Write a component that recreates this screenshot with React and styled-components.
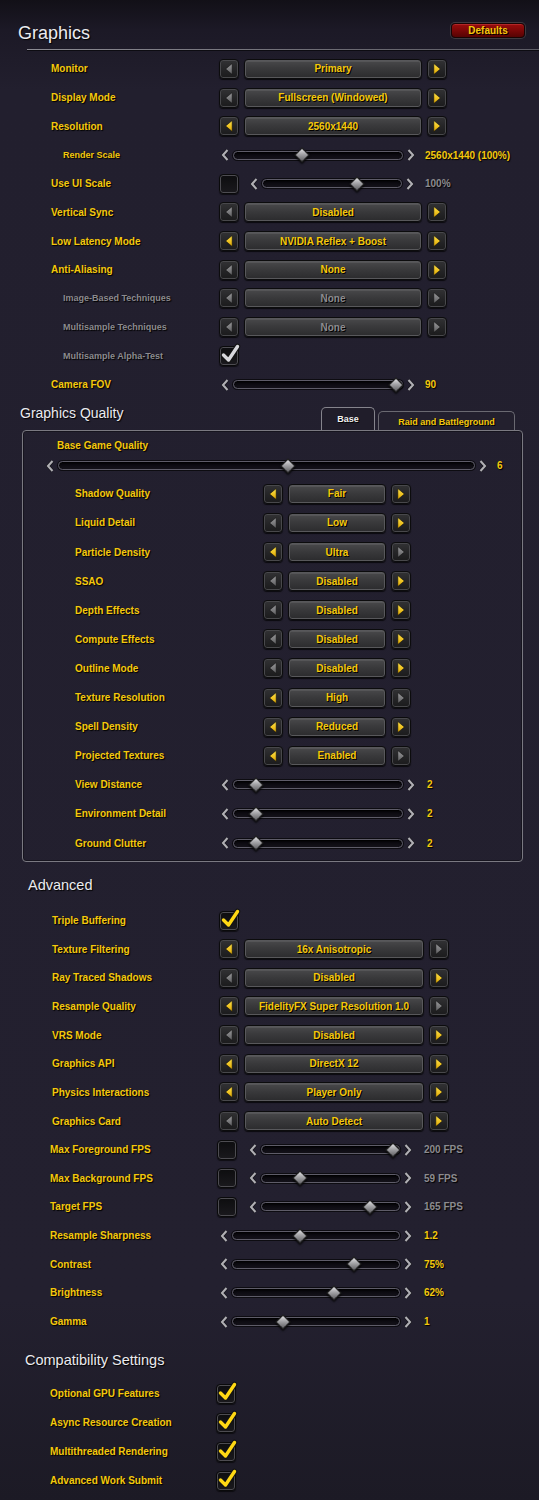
import React from 'react';
import styled, { createGlobalStyle } from 'styled-components';

const GOLD = '#f4c80c';
const GREY_TEXT = '#8c8b8f';

const GlobalStyle = createGlobalStyle`
  html, body {
    margin: 0;
    padding: 0;
    background: #23202f;
  }
  body {
    font-family: "Liberation Sans", Arial, sans-serif;
  }
`;

const Page = styled.div`
  width: 539px;
  height: 1500px;
  overflow: hidden;
  background: linear-gradient(
    180deg,
    #121017 0px,
    #1c1926 30px,
    #221f2e 90px,
    #23202f 1300px,
    #1c1a25 1500px
  );
`;

const Header = styled.div`
  display: flex;
  align-items: ${p => p.$align || 'center'};
  height: ${p => p.$h}px;
  padding: ${p => p.$pt || 0}px 0 ${p => p.$pb || 0}px ${p => p.$x}px;
  box-sizing: border-box;
`;

const Title = styled.div`
  font-size: ${p => p.$size || 14.5}px;
  line-height: 1.15;
  color: #ebebef;
  text-shadow: 1px 1px 1px #000;
  margin-bottom: ${p => p.$mb || 0}px;
`;

const DefaultsButton = styled.div`
  margin-left: auto;
  margin-right: 14px;
  margin-bottom: 6px;
  width: 74px;
  height: 15px;
  box-sizing: border-box;
  border-radius: 4px;
  border: 1px solid #1a0404;
  background: linear-gradient(180deg, #9a0d0d 0%, #7a0707 50%, #560303 100%);
  box-shadow: 0 0 0 1px #3e3a40, inset 0 1px 0 rgba(255, 120, 120, 0.25);
  display: flex;
  align-items: center;
  justify-content: center;
  font-size: 10px;
  font-weight: bold;
  color: ${GOLD};
  text-shadow: 1px 1px 0 #000;
`;

const Divider = styled.div`
  height: 1px;
  margin-left: 27px;
  background: linear-gradient(90deg, #8d8c94, #6c6b73 60%, #5e5d66);
  box-shadow: 0 1px 0 rgba(0, 0, 0, 0.55);
`;

const Rows = styled.div`
  padding-top: ${p => p.$pt || 0}px;
`;

const Row = styled.div`
  display: flex;
  align-items: center;
  height: ${p => p.$h}px;
  padding-left: ${p => p.$x}px;
`;

const Label = styled.div`
  flex: none;
  box-sizing: border-box;
  width: ${p => p.$w}px;
  padding-left: ${p => p.$indent || 0}px;
  font-size: ${p => (p.$small ? 9 : 10)}px;
  font-weight: bold;
  color: ${p => (p.$dim ? GREY_TEXT : GOLD)};
  text-shadow: 1px 1px 1px #000;
  white-space: nowrap;
`;

/* ---------- arrow stepper (dropdown) ---------- */

const Stepper = styled.div`
  display: flex;
  align-items: center;
  gap: 5px;
`;

const ArrowBtn = styled.div`
  width: 20px;
  height: 20px;
  box-sizing: border-box;
  border-radius: 4px;
  border: 1px solid #0c0c0d;
  background: linear-gradient(180deg, #323234 0%, #232325 60%, #1b1b1c 100%);
  box-shadow: inset 0 0 0 1px #48484b, 0 1px 1px rgba(0, 0, 0, 0.7);
  display: flex;
  align-items: center;
  justify-content: center;
`;

const ValueBox = styled.div`
  width: ${p => p.$w}px;
  height: 20px;
  box-sizing: border-box;
  border-radius: 4px;
  border: 1px solid #0c0c0d;
  background: linear-gradient(180deg, #4a4a4c 0%, #3a3a3c 45%, #2b2b2d 100%);
  box-shadow: inset 0 0 0 1px #58585b, inset 0 2px 0 rgba(255, 255, 255, 0.08),
    0 1px 1px rgba(0, 0, 0, 0.7);
  display: flex;
  align-items: center;
  justify-content: center;
  font-size: 10px;
  font-weight: bold;
  color: ${p => (p.$dim ? GREY_TEXT : GOLD)};
  text-shadow: 1px 1px 0 #000;
  white-space: nowrap;
`;

const Triangle = ({ dir, on }) => (
  <svg width="8" height="12" viewBox="0 0 8 12">
    <defs>
      <linearGradient id={`tri-${on ? 'on' : 'off'}`} x1="0" y1="0" x2="0" y2="1">
        <stop offset="0" stopColor={on ? '#ffe24a' : '#9a9a9c'} />
        <stop offset="1" stopColor={on ? '#e0a800' : '#5e5e60'} />
      </linearGradient>
    </defs>
    <polygon
      points={dir === 'left' ? '7.2,0.5 7.2,11.5 0.6,6' : '0.8,0.5 0.8,11.5 7.4,6'}
      fill={`url(#tri-${on ? 'on' : 'off'})`}
      stroke="#111"
      strokeWidth="0.6"
    />
  </svg>
);

const Dropdown = ({ value, width, left, right, dim }) => (
  <Stepper>
    <ArrowBtn>
      <Triangle dir="left" on={left} />
    </ArrowBtn>
    <ValueBox $w={width} $dim={dim}>{value}</ValueBox>
    <ArrowBtn>
      <Triangle dir="right" on={right} />
    </ArrowBtn>
  </Stepper>
);

/* ---------- slider ---------- */

const SliderWrap = styled.div`
  display: flex;
  align-items: center;
  margin-left: ${p => p.$lead || 0}px;
`;

const ChevronSvg = styled.svg`
  flex: none;
  display: block;
`;

const Chevron = ({ dir }) => {
  const pts = dir === 'left' ? '6.5,1 2,6 6.5,11' : '1.5,1 6,6 1.5,11';
  return (
    <ChevronSvg width="8" height="12" viewBox="0 0 8 12">
      <polyline points={pts} fill="none" stroke="#15141a" strokeWidth="3.4" />
      <polyline points={pts} fill="none" stroke="#b0afb4" strokeWidth="2.1" />
    </ChevronSvg>
  );
};

const Track = styled.div`
  position: relative;
  flex: none;
  width: ${p => p.$w}px;
  height: 9px;
  margin: 0 4px;
  box-sizing: border-box;
  border-radius: 5px;
  border: 1px solid #5e5c68;
  background: linear-gradient(180deg, #060509, #14121a);
  box-shadow: 0 0 0 1px #0d0c11, inset 0 1px 2px #000;
`;

const Thumb = styled.div`
  position: absolute;
  top: 50%;
  width: 9px;
  height: 9px;
  transform: translate(-50%, -50%) rotate(45deg);
  border: 1px solid #222;
  background: linear-gradient(135deg, #e2e2e4 0%, #a3a3a6 45%, #5d5d60 100%);
  box-shadow: 1px 1px 2px rgba(0, 0, 0, 0.8);
`;

const SliderValue = styled.div`
  margin-left: ${p => p.$gap}px;
  font-size: 10px;
  font-weight: bold;
  color: ${p => (p.$dim ? GREY_TEXT : GOLD)};
  text-shadow: 1px 1px 1px #000;
  white-space: nowrap;
`;

const Slider = ({ lead, width, pos, value, gap = 10, dim }) => (
  <SliderWrap $lead={lead}>
    <Chevron dir="left" />
    <Track $w={width}>
      <Thumb style={{ left: `${pos}%` }} />
    </Track>
    <Chevron dir="right" />
    <SliderValue $gap={gap} $dim={dim}>{value}</SliderValue>
  </SliderWrap>
);

/* ---------- checkbox ---------- */

const Box = styled.div`
  position: relative;
  flex: none;
  width: 20px;
  height: 20px;
  box-sizing: border-box;
  border-radius: 4px;
  border: 1px solid #0a0a0b;
  background: linear-gradient(180deg, #0d0d0f, #1a191d);
  box-shadow: inset 0 0 0 1px #4d4c51, 0 1px 1px rgba(0, 0, 0, 0.6);
`;

const CheckSvg = styled.svg`
  position: absolute;
  left: 1px;
  top: -3px;
  overflow: visible;
`;

const Checkbox = ({ checked, grey }) => (
  <Box>
    {checked && (
      <CheckSvg width="18" height="20" viewBox="0 0 18 20">
        <path
          d="M2.5 11 L7.5 16 L16.5 2.5"
          fill="none"
          stroke="#141414"
          strokeWidth="5.5"
          strokeLinecap="round"
          strokeLinejoin="round"
        />
        <path
          d="M2.5 11 L7.5 16 L16.5 2.5"
          fill="none"
          stroke={grey ? '#d8d8dc' : '#ffd814'}
          strokeWidth="3.4"
          strokeLinecap="round"
          strokeLinejoin="round"
        />
      </CheckSvg>
    )}
  </Box>
);

/* ---------- graphics quality panel ---------- */

const QualityHeader = styled.div`
  display: flex;
  align-items: flex-end;
  height: 31px;
  padding-left: 20px;
`;

const Tabs = styled.div`
  display: flex;
  align-items: flex-end;
  gap: 3px;
  margin-left: auto;
  margin-right: 24px;
`;

const Tab = styled.div`
  height: ${p => (p.$active ? 23 : 19)}px;
  width: ${p => p.$w}px;
  box-sizing: border-box;
  border: 1px solid ${p => (p.$active ? '#85848c' : '#6a6971')};
  border-bottom: none;
  border-radius: 5px 5px 0 0;
  background: ${p => (p.$active ? '#201d2a' : '#23202e')};
  display: flex;
  align-items: center;
  justify-content: center;
  padding-top: ${p => (p.$active ? 1 : 2)}px;
  font-size: 9px;
  font-weight: bold;
  color: ${p => (p.$active ? '#f2f2f2' : GOLD)};
  text-shadow: 1px 1px 0 #000;
`;

const Panel = styled.div`
  margin: 0 16px 0 22px;
  padding: 5px 0 3px;
  border: 1px solid #7a7981;
  border-radius: 4px;
  box-shadow: inset 0 0 0 1px rgba(0, 0, 0, 0.35);
`;

/* ---------- data ---------- */

const graphicsRows = [
  { label: 'Monitor', dd: { value: 'Primary', left: false, right: true } },
  { label: 'Display Mode', dd: { value: 'Fullscreen (Windowed)', left: false, right: true } },
  { label: 'Resolution', dd: { value: '2560x1440', left: true, right: true } },
  { label: 'Render Scale', sub: true, slider: { lead: 2, width: 170, pos: 40.6, value: '2560x1440 (100%)' } },
  { label: 'Use UI Scale', check: false, slider: { lead: 11, width: 140, pos: 68, value: '100%', dim: true, gap: 11 } },
  { label: 'Vertical Sync', dd: { value: 'Disabled', left: false, right: true } },
  { label: 'Low Latency Mode', dd: { value: 'NVIDIA Reflex + Boost', left: true, right: true } },
  { label: 'Anti-Aliasing', dd: { value: 'None', left: false, right: true } },
  { label: 'Image-Based Techniques', sub: true, dim: true, dd: { value: 'None', left: false, right: false, dim: true } },
  { label: 'Multisample Techniques', sub: true, dim: true, dd: { value: 'None', left: false, right: false, dim: true } },
  { label: 'Multisample Alpha-Test', sub: true, dim: true, check: true, grey: true },
  { label: 'Camera FOV', slider: { lead: 2, width: 170, pos: 96.5, value: '90' } },
];

const qualityRows = [
  { label: 'Shadow Quality', dd: { value: 'Fair', left: true, right: true } },
  { label: 'Liquid Detail', dd: { value: 'Low', left: false, right: true } },
  { label: 'Particle Density', dd: { value: 'Ultra', left: true, right: false } },
  { label: 'SSAO', dd: { value: 'Disabled', left: false, right: true } },
  { label: 'Depth Effects', dd: { value: 'Disabled', left: false, right: true } },
  { label: 'Compute Effects', dd: { value: 'Disabled', left: false, right: true } },
  { label: 'Outline Mode', dd: { value: 'Disabled', left: false, right: true } },
  { label: 'Texture Resolution', dd: { value: 'High', left: true, right: false } },
  { label: 'Spell Density', dd: { value: 'Reduced', left: true, right: true } },
  { label: 'Projected Textures', dd: { value: 'Enabled', left: true, right: false } },
  { label: 'View Distance', slider: { width: 170, pos: 13, value: '2', gap: 12 } },
  { label: 'Environment Detail', slider: { width: 170, pos: 13, value: '2', gap: 12 } },
  { label: 'Ground Clutter', slider: { width: 170, pos: 13, value: '2', gap: 12 } },
];

const advancedRows = [
  { label: 'Triple Buffering', check: true },
  { label: 'Texture Filtering', dd: { value: '16x Anisotropic', left: true, right: false } },
  { label: 'Ray Traced Shadows', dd: { value: 'Disabled', left: false, right: true } },
  { label: 'Resample Quality', dd: { value: 'FidelityFX Super Resolution 1.0', left: true, right: false } },
  { label: 'VRS Mode', dd: { value: 'Disabled', left: false, right: true } },
  { label: 'Graphics API', dd: { value: 'DirectX 12', left: true, right: true } },
  { label: 'Physics Interactions', dd: { value: 'Player Only', left: true, right: true } },
  { label: 'Graphics Card', dd: { value: 'Auto Detect', left: false, right: true } },
];

const displayRows = [
  { label: 'Max Foreground FPS', check: false, slider: { lead: 12, width: 139, pos: 95.7, value: '200 FPS', dim: true, gap: 12 } },
  { label: 'Max Background FPS', check: false, slider: { lead: 12, width: 139, pos: 28, value: '59 FPS', dim: true, gap: 12 } },
  { label: 'Target FPS', check: false, slider: { lead: 12, width: 139, pos: 79, value: '165 FPS', dim: true, gap: 12 } },
  { label: 'Resample Sharpness', slider: { lead: 3, width: 168, pos: 40.5, value: '1.2', gap: 12 } },
  { label: 'Contrast', slider: { lead: 3, width: 168, pos: 73, value: '75%', gap: 12 } },
  { label: 'Brightness', slider: { lead: 3, width: 168, pos: 61, value: '62%', gap: 12 } },
  { label: 'Gamma', slider: { lead: 3, width: 168, pos: 30, value: '1', gap: 12 } },
];

const compatRows = [
  'Optional GPU Features',
  'Async Resource Creation',
  'Multithreaded Rendering',
  'Advanced Work Submit',
];

const Control = ({ row, ddWidth }) => (
  <>
    {row.check !== undefined && <Checkbox checked={row.check} grey={row.grey} />}
    {row.dd && <Dropdown {...row.dd} width={ddWidth} />}
    {row.slider && <Slider {...row.slider} />}
  </>
);

const SettingsList = ({ rows, x, labelWidth, ddWidth, h }) =>
  rows.map(row => (
    <Row key={row.label} $h={h} $x={x}>
      <Label
        $w={labelWidth(row)}
        $indent={row.sub ? 12 : 0}
        $small={row.sub}
        $dim={row.dim}
      >
        {row.label}
      </Label>
      <Control row={row} ddWidth={ddWidth} />
    </Row>
  ));

export default function App() {
  return (
    <Page>
      <GlobalStyle />

      <Header $h={49} $x={18} $align="flex-end" $pb={5}>
        <Title $size={18}>Graphics</Title>
        <DefaultsButton>Defaults</DefaultsButton>
      </Header>
      <Divider />
      <Rows $pt={4.6}>
        <SettingsList rows={graphicsRows} x={51} h={28.7} ddWidth={178} labelWidth={() => 168} />
      </Rows>

      <QualityHeader>
        <Title $size={14} $mb={9}>Graphics Quality</Title>
        <Tabs>
          <Tab $active $w={54}>Base</Tab>
          <Tab $w={137}>Raid and Battleground</Tab>
        </Tabs>
      </QualityHeader>
      <Panel>
        <Row $h={20} $x={34}>
          <Label $w={200}>Base Game Quality</Label>
        </Row>
        <Row $h={20} $x={23}>
          <Slider width={417} pos={55.2} value="6" gap={10} />
        </Row>
        <Rows $pt={3.5}>
          <SettingsList
            rows={qualityRows}
            x={52}
            h={29.1}
            ddWidth={98}
            labelWidth={row => (row.slider ? 146 : 188)}
          />
        </Rows>
      </Panel>

      <Header $h={44.7} $x={28} $pt={3}>
        <Title>Advanced</Title>
      </Header>
      <SettingsList rows={advancedRows} x={52} h={28.65} ddWidth={180} labelWidth={() => 167} />
      <SettingsList rows={displayRows} x={50} h={28.65} labelWidth={() => 167} />

      <Header $h={43.5} $x={25} $pt={5}>
        <Title>Compatibility Settings</Title>
      </Header>
      {compatRows.map(label => (
        <Row key={label} $h={29} $x={50}>
          <Label $w={166}>{label}</Label>
          <Checkbox checked />
        </Row>
      ))}
    </Page>
  );
}
